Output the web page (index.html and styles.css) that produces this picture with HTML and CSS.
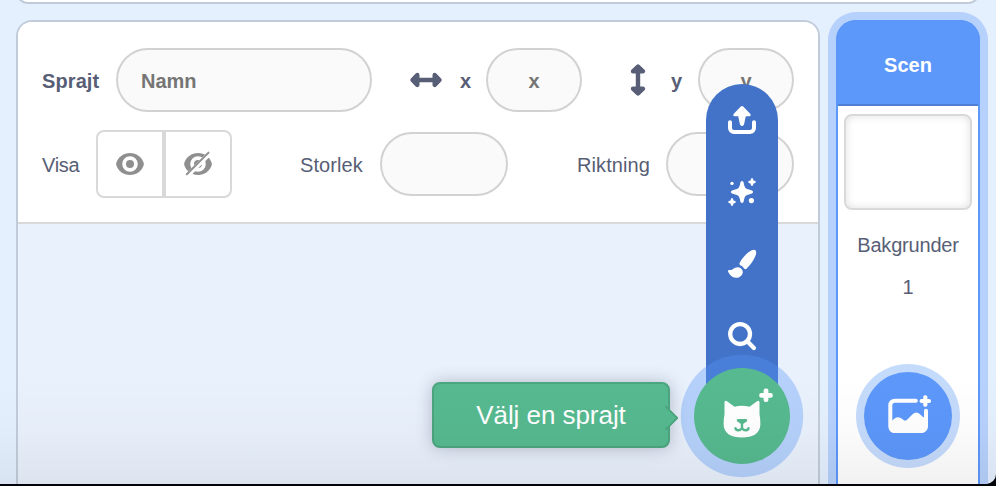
FILE: index.html
```html
<!DOCTYPE html>
<html lang="sv">
<head>
<meta charset="utf-8">
<title>Sprajter</title>
<link rel="stylesheet" href="styles.css">
</head>
<body>
<div class="window">
  <div class="stage-edge"></div>
  <main class="targets">
    <section class="sprites">
      <div class="info">
        <div class="row">
          <label class="label strong name-label">Sprajt</label>
          <input class="field name" placeholder="Namn">
          <svg class="arrow x-arrow" width="32" height="16" viewBox="0 0 32 16"><path d="M5 8H27M7.300 3L2.500 8L7.300 13ZM24.700 3L29.500 8L24.700 13Z"/></svg>
          <label class="label strong x-label">x</label>
          <input class="field coord" placeholder="x">
          <svg class="arrow y-arrow" width="16" height="32" viewBox="0 0 16 32"><path d="M8 5V27M3 7.300L8 2.500L13 7.300ZM3 24.700L8 29.500L13 24.700Z"/></svg>
          <label class="label strong y-label">y</label>
          <input class="field coord" placeholder="y">
        </div>
        <div class="row second">
          <span class="label show-label">Visa</span>
          <div class="toggle">
            <button class="eye"><svg width="28" height="22" viewBox="0 0 28 22"><path fill="#8f8f8f" fill-rule="evenodd" d="M14 0C7.500 0 2.500 4 .5 9.300Q-.3 11 .5 12.700C2.500 18 7.500 22 14 22s11.500-4 13.500-9.300Q28.300 11 27.500 9.300C25.500 4 20.500 0 14 0Zm0 3.200a7.800 7.800 0 1 1 0 15.600 7.800 7.800 0 0 1 0-15.600Zm0 3.800a4 4 0 1 0 0 8 4 4 0 0 0 0-8Z"/></svg></button>
            <button class="eye"><svg width="28" height="22" viewBox="0 0 28 22"><path fill="#8f8f8f" fill-rule="evenodd" d="M14 0C7.500 0 2.500 4 .5 9.300Q-.3 11 .5 12.700C2.500 18 7.500 22 14 22s11.500-4 13.500-9.300Q28.300 11 27.500 9.300C25.500 4 20.500 0 14 0Zm0 3.200a7.800 7.800 0 1 1 0 15.600 7.800 7.800 0 0 1 0-15.600Zm0 3.800a4 4 0 1 0 0 8 4 4 0 0 0 0-8Z"/><path d="M3.500 22.500L26 0" stroke="#fff" stroke-width="4.600"/><path d="M2.800 21.300L24.500-.4" stroke="#8f8f8f" stroke-width="2" stroke-linecap="round"/></svg></button>
          </div>
          <span class="label size-label">Storlek</span>
          <input class="field wide" aria-label="Storlek">
          <span class="label dir-label">Riktning</span>
          <input class="field wide" aria-label="Riktning">
        </div>
      </div>
    </section>
    <aside class="stage">
      <header class="stage-head">Scen</header>
      <div class="thumb"></div>
      <div class="label backdrops">Bakgrunder</div>
      <div class="label count">1</div>
      <button class="round backdrop-add"><svg width="44" height="40" viewBox="0 0 44 40"><path d="M29.800 4.700H8.800a4.500 4.500 0 0 0-4.500 4.500V30.500a4.500 4.500 0 0 0 4.500 4.500H35.500a4.500 4.500 0 0 0 4.500-4.500V14.700" fill="none" stroke="#fff" stroke-width="4" stroke-linecap="round"/><path fill="#fff" d="M4 26.500L8.500 22.600Q12.300 19.700 16 22.700L17.500 24Q19.300 25.300 21 23.700L26.300 18.500Q30.300 14.800 34 18.200L37 21Q38.500 22 41 22V31a6 6 0 0 1-6 6H8a5 5 0 0 1-5-5Z"/><g fill="#fff"><rect x="37.200" y="-.700" width="4.200" height="11.400" rx="1.800"/><rect x="33.600" y="2.900" width="11.400" height="4.200" rx="1.800"/></g></svg></button>
    </aside>
  </main>
  <div class="menu">
    <button class="tool"><svg width="32" height="32" viewBox="0 0 32 32"><path fill="none" stroke="#fff" stroke-width="4" stroke-linecap="round" d="M4 18.200v5.800a4 4 0 0 0 4 4H24a4 4 0 0 0 4-4V18.200"/><path fill="#fff" d="M14.800 2.500Q16 1.400 17.200 2.500L24.200 9.800Q25.600 12.200 23.300 12.200H19.800L18 20.500Q16 23.500 14 20.500L12.200 12.200H8.700Q6.400 12.200 7.800 9.800Z"/></svg></button>
    <button class="tool"><svg width="32" height="32" viewBox="0 0 32 32"><g fill="#fff"><path d="M14.500 6Q16 3.800 17.500 6Q18.500 12 20.500 12.800L26 14.500Q28.200 16 26 17.500L20.500 19.200Q18.500 20 17.500 26Q16 28.200 14.500 26Q13.500 20 11.500 19.200L6 17.500Q3.800 16 6 14.500L11.500 12.800Q13.500 12 14.500 6Z"/><path d="M25 2.800Q26 1.400 27 2.800L27.500 4.500L29.200 5Q30.600 6 29.200 7L27.500 7.500L27 9.200Q26 10.600 25 9.200L24.500 7.500L22.800 7Q21.400 6 22.800 5L24.500 4.500Z"/><path d="M5 22.800Q6 21.400 7 22.800L7.500 24.500L9.200 25Q10.600 26 9.200 27L7.500 27.500L7 29.200Q6 30.600 5 29.200L4.500 27.500L2.800 27Q1.400 26 2.800 25L4.500 24.500Z"/><circle cx="6" cy="7.400" r="1.700"/><circle cx="25.400" cy="24.600" r="2.600"/></g></svg></button>
    <button class="tool"><svg width="32" height="32" viewBox="0 0 32 32"><path fill="#fff" d="M29.600 2.400Q31 4 29.300 8.200C27.300 13 24 17.200 20.500 20.800Q18.900 22 17.900 20.200Q16.600 17.600 13.900 16.900Q12.900 16 14 14.200C16.500 9.500 21.500 4.200 25.800 2.300Q28.500 1.200 29.600 2.400ZM2 22.500Q2.500 21.700 4 22.100C7 22.300 7.500 19 12 19.200C16.500 19.800 18.200 24 15.700 27.200C12 31.400 5.500 30.300 2.500 24.500Q1.800 23.200 2 22.500Z"/></svg></button>
    <button class="tool"><svg width="32" height="32" viewBox="0 0 32 32" fill="none" stroke="#fff" stroke-linecap="round"><circle cx="14.100" cy="14.100" r="9.900" stroke-width="4.300"/><path d="M22 22L27.900 27.900" stroke-width="4.300"/></svg></button>
  </div>
  <button class="round sprite-add"><svg width="60" height="60" viewBox="0 0 60 60"><path fill="#fff" d="M12.500 16.500Q12.500 13.700 15 15.300L22.500 20.800Q30 18.900 37.500 20.800L45 15.300Q47.500 13.700 47.500 16.500V28.500Q48.500 33 48.400 38.500C48 47.500 41 51.500 30 51.500S12 47.500 11.600 38.500Q11.500 33 12.500 28.500Z"/><path class="nose" d="M26.300 33H33.700Q36 33.200 35 35.200Q32 37.600 31.200 37.700H28.800Q28 37.600 25 35.200Q24 33.200 26.300 33Z"/><path class="mouth" fill="none" stroke-width="2.400" stroke-linecap="round" stroke-linejoin="round" d="M30 37V42C28.500 44.800 24 45 23.500 42.300M30 42C31.500 44.800 36 45 36.500 42.300"/><g fill="#fff"><rect x="51.600" y="2.500" width="4.800" height="13.600" rx="2"/><rect x="47.200" y="6.900" width="13.600" height="4.800" rx="2"/></g></svg></button>
  <div class="tooltip">Välj en sprajt</div>
  <div class="shade"></div>
</div>
</body>
</html>
```
FILE: styles.css
```css
* { box-sizing: border-box; }
html { background: #03040a; }
body {
  margin: 0;
  height: 486px;
  overflow: hidden;
  font-family: "Liberation Sans", Arial, sans-serif;
  font-size: 20px;
  color: #575e75;
}
button { border: 0; padding: 0; background: none; }
svg { display: block; flex: none; overflow: visible; }

.window {
  position: relative;
  height: 484px;
  overflow: hidden;
  background: #e5f0ff;
  border-radius: 0 0 10px 0;
}
.stage-edge {
  height: 24px;
  margin: -20px 16px 16px;
  border: 2px solid #c0cbda;
  border-radius: 16px;
  background: #fff;
}
.targets { display: flex; gap: 16px; padding: 0 16px; height: 464px; }

.sprites {
  width: 804px;
  border: 2px solid #c1ccda;
  border-bottom: 0;
  border-radius: 16px 16px 0 0;
  background: #e9f1fc;
  overflow: hidden;
}
.info {
  height: 202px;
  padding: 26px 24px 0;
  background: #fff;
  border-bottom: 2px solid #d9d9d9;
}
.row { display: flex; align-items: center; height: 64px; }
.second { margin-top: 20px; }
.label { white-space: nowrap; line-height: 24px; }
.row .label { padding-top: 2px; }
.strong { font-weight: bold; }
.name-label { width: 74px; letter-spacing: .1px; }
.x-label { width: 26px; }
.y-label { width: 27px; }
.x-arrow { margin: 0 18px 0 38px; }
.y-arrow { margin: 0 25px 0 48px; }
.arrow { fill: #575e75; stroke: #575e75; stroke-width: 4.400; stroke-linejoin: round; flex: none; }
.show-label { width: 54px; letter-spacing: -.3px; }
.size-label { width: 80px; margin-left: 68px; letter-spacing: .1px; }
.dir-label { width: 89px; margin-left: 69px; letter-spacing: .1px; }

.field {
  height: 64px;
  padding: 2px 0 0;
  border: 2px solid #d2d2d2;
  border-radius: 32px;
  background: #fafafa;
  font: bold 20px "Liberation Sans", Arial, sans-serif;
  text-align: center;
}
.field::placeholder { color: #757575; opacity: 1; }
.name { width: 256px; padding-left: 23px; text-align: left; }
.coord { width: 96px; }
.wide { width: 128px; }

.toggle { display: flex; width: 136px; height: 68px; border: 2px solid #d9d9d9; border-radius: 8px; }
.eye { flex: 1; display: flex; align-items: center; justify-content: center; }
.eye + .eye { flex: 0 0 66px; border-left: 2px solid #d9d9d9; }
.eye:first-child { border-right: 2px solid #d9d9d9; }

.stage {
  width: 144px;
  display: flex;
  flex-direction: column;
  align-items: center;
  border: 2px solid #5c97fa;
  border-width: 0 2px;
  border-radius: 20px 20px 0 0;
  background: linear-gradient(#5c97fa 40px, #fff 40px);
  box-shadow: 0 0 0 8px #b7d1fd;
}
.stage-head {
  width: 144px;
  height: 86px;
  padding-top: 2px;
  line-height: 86px;
  text-align: center;
  font-weight: bold;
  color: #fff;
  background: linear-gradient(#4f7ed3, #4f7ed3) 50% 100% / 140px 2px no-repeat #5c97fa;
  border-radius: 20px 20px 0 0;
}
.thumb {
  width: 128px;
  height: 96px;
  margin-top: 8px;
  border: 2px solid #d9d9d9;
  border-radius: 8px;
  box-shadow: inset 0 0 8px rgba(0, 0, 0, .13);
}
.backdrops { margin-top: 23px; letter-spacing: -.2px; }
.count { margin-top: 18px; }

.round { display: flex; align-items: center; justify-content: center; border-radius: 50%; }
.backdrop-add { width: 88px; height: 88px; margin-top: 73px; background: #5c97fa; box-shadow: 0 0 0 8px #c5dbfc; }
.menu {
  position: absolute;
  left: 706px;
  top: 84px;
  width: 72px;
  height: 332px;
  border-radius: 36px 36px 0 0;
  background: #4273c8;
}
.tool { display: flex; width: 72px; height: 72px; align-items: center; justify-content: center; }
.sprite-add {
  position: absolute;
  left: 693.600px;
  top: 367.600px;
  width: 96.800px;
  height: 96.800px;
  background: #56b98f;
  box-shadow: 0 0 0 13.200px rgba(85, 148, 249, .35);
}
.nose { fill: #56b98f; }
.mouth { stroke: #56b98f; }
.tooltip {
  position: absolute;
  left: 432px;
  top: 382px;
  width: 238px;
  height: 66px;
  border: 2px solid #4ba57e;
  border-radius: 8px;
  background: #56b98f;
  box-shadow: 0 0 16px rgba(60, 70, 90, .32);
  color: #fff;
  font-size: 26px;
  letter-spacing: -.05px;
  line-height: 62px;
  text-align: center;
}
.tooltip::after {
  content: "";
  position: absolute;
  right: -7px;
  top: 25px;
  width: 16px;
  height: 16px;
  transform: rotate(45deg);
  border: solid #4ba57e;
  border-width: 2px 2px 0 0;
  border-radius: 0 2px 0 0;
  background: #56b98f;
}
.shade {
  position: absolute;
  left: 0;
  right: 0;
  bottom: 0;
  height: 110px;
  background: linear-gradient(rgba(0, 0, 0, 0), rgba(0, 0, 0, .015) 50%, rgba(0, 0, 0, .055));
  pointer-events: none;
}
```
